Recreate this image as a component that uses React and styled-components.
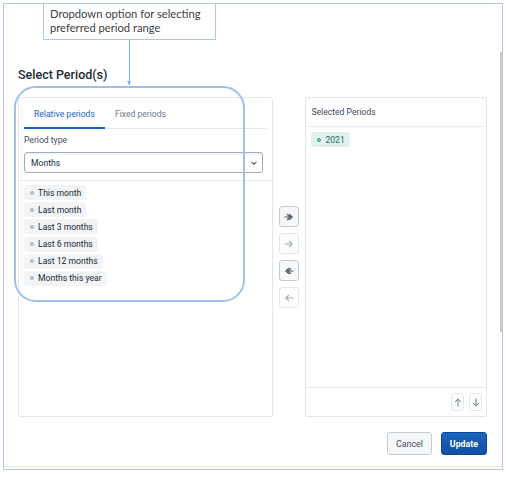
import React from "react";
import styled, { createGlobalStyle } from "styled-components";

const Global = createGlobalStyle`
  html, body { margin: 0; padding: 0; background: #fff; }
  body { font-family: Roboto, "Liberation Sans", sans-serif; color: #212934; }
  * { box-sizing: border-box; }
`;

const Page = styled.div`
  position: relative;
  width: 506px;
  height: 477px;
  padding: 3px;
  background: #fff;
`;

const Frame = styled.div`
  position: relative;
  width: 500px;
  height: 467px;
  border: 1px solid #b3c5ea;
  box-shadow: inset 0 -2px 0 #fff, inset 0 -3px 0 #e6e8ea;
  display: flex;
  flex-direction: column;
  padding: 63px 15px 0 14px;
`;

const Title = styled.h2`
  margin: 0 0 14px;
  height: 16px;
  line-height: 16px;
  font-size: 12.5px;
  font-weight: 500;
  color: #212934;
`;

const Columns = styled.div`
  display: flex;
  gap: 6px;
  height: 320px;
`;

const Panel = styled.div`
  width: ${(p) => p.$w}px;
  height: 320px;
  border: 1px solid #e3e7ec;
  border-radius: 2px;
  display: flex;
  flex-direction: column;
`;

const TabBar = styled.div`
  display: flex;
  margin: 0 5px;
  height: 31px;
  border-bottom: 1px solid #e3e7ec;
`;

const Tab = styled.div`
  padding: 0 10px;
  display: flex;
  align-items: center;
  font-size: 8.6px;
  color: ${(p) => (p.$active ? "#1565c0" : "#6e7a8a")};
  box-shadow: ${(p) => (p.$active ? "inset 0 -2px 0 #1565c0" : "none")};
  margin-bottom: -1px;
`;

const Field = styled.div`
  padding: 5px 9px 7px 5px;
  border-bottom: 1px solid #e8edf2;
`;

const Label = styled.div`
  font-size: 8.6px;
  line-height: 12px;
  height: 12px;
  color: #404b5a;
  margin-bottom: 6px;
`;

const Select = styled.div`
  height: 21px;
  border: 1px solid #a0adba;
  border-radius: 3px;
  display: flex;
  align-items: center;
  justify-content: space-between;
  padding: 0 4px 0 6px;
  font-size: 8.6px;
  color: #212934;
  box-shadow: inset 0 1px 2px rgba(48, 54, 60, 0.1);
`;

const OptionList = styled.div`
  display: flex;
  flex-direction: column;
  align-items: flex-start;
  gap: 2.2px;
  padding: 4px 5px;
`;

const Chip = styled.div`
  height: 15px;
  display: flex;
  align-items: center;
  gap: 4px;
  padding: 0 5px 0 6px;
  border-radius: 3px;
  background: ${(p) => (p.$selected ? "#e1f1ee" : "#f1f3f5")};
  color: ${(p) => (p.$selected ? "#1b6b5c" : "#212934")};
  font-size: 8.6px;
`;

const Dot = styled.span`
  width: 4px;
  height: 4px;
  border-radius: 50%;
  border: 1px solid ${(p) => (p.$selected ? "#3a9a86" : "#a0adba")};
  background: ${(p) => (p.$selected ? "#8fd0c1" : "#d5dbe1")};
`;

const Actions = styled.div`
  display: flex;
  flex-direction: column;
  gap: 6px;
  padding-top: 109px;
`;

const ActionBtn = styled.div`
  width: 20px;
  height: 21px;
  border-radius: 3px;
  border: 1px solid ${(p) => (p.$enabled ? "#c4cbd3" : "#e3e7ec")};
  background: ${(p) => (p.$enabled ? "#f6f7f9" : "#fbfcfc")};
  display: flex;
  align-items: center;
  justify-content: center;
  color: ${(p) => (p.$enabled ? "#4a5768" : "#a0adba")};
`;

const PanelHeader = styled.div`
  height: 29px;
  padding: 0 5px;
  display: flex;
  align-items: center;
  font-size: 8.6px;
  color: #404b5a;
  border-bottom: 1px solid #e8edf2;
`;

const SelectedList = styled.div`
  flex: 1;
  padding: 5px 5px;
  display: flex;
  flex-direction: column;
  align-items: flex-start;
`;

const PanelFooter = styled.div`
  height: 29px;
  border-top: 1px solid #e8edf2;
  display: flex;
  align-items: center;
  justify-content: flex-end;
  gap: 5px;
  padding: 0 4px;
`;

const SmallBtn = styled.div`
  width: 13px;
  height: 18px;
  border: 1px solid #e3e7ec;
  border-radius: 3px;
  background: #fbfcfc;
  display: flex;
  align-items: center;
  justify-content: center;
  color: #6e7a8a;
`;

const ButtonRow = styled.div`
  display: flex;
  justify-content: flex-end;
  gap: 9px;
  margin-top: 15px;
`;

const Button = styled.div`
  height: 23px;
  padding: 0 ${(p) => (p.$primary ? 8 : 8)}px;
  border-radius: 3px;
  display: flex;
  align-items: center;
  font-size: 8.8px;
  font-weight: ${(p) => (p.$primary ? 700 : 400)};
  color: ${(p) => (p.$primary ? "#fff" : "#404b5a")};
  background: ${(p) =>
    p.$primary ? "linear-gradient(#1d66c0, #0f4fa3)" : "#f6f7f9"};
  border: 1px solid ${(p) => (p.$primary ? "#0d4896" : "#c4cbd3")};
`;

const Scroll = styled.div`
  position: absolute;
  right: -1px;
  top: 48px;
  width: 3px;
  height: 280px;
  background: #c9c9c9;
`;

const Callout = styled.div`
  position: absolute;
  left: 43px;
  top: 3px;
  width: 173px;
  height: 37px;
  border: 1px solid #a9c8ea;
  background: #fff;
  padding: 3px 6px;
  font-family: Lato, "Open Sans", sans-serif;
  font-size: 11.2px;
  line-height: 14px;
  color: #404040;
`;

const Connector = styled.div`
  position: absolute;
  left: 129px;
  top: 40px;
  width: 1px;
  height: 45px;
  background: #86aee0;
  &::after {
    content: "";
    position: absolute;
    left: -2px;
    bottom: 0;
    border-left: 2.5px solid transparent;
    border-right: 2.5px solid transparent;
    border-top: 4px solid #86aee0;
  }
`;

const Highlight = styled.div`
  position: absolute;
  left: 14px;
  top: 86px;
  width: 231px;
  height: 216px;
  border: 2px solid #9fc0e6;
  border-radius: 22px;
  pointer-events: none;
`;

const ArrowIcon = ({ dir = "right", double }) => {
  const flip = dir === "left" ? "scale(-1,1) translate(-10,0)" : undefined;
  return (
    <svg width="10" height="10" viewBox="0 0 10 10">
      <g transform={flip} fill="none" stroke="currentColor" strokeWidth="1.2" strokeLinecap="round" strokeLinejoin="round">
        <path d="M1 5h7" />
        <path d="M5.5 2.5L8 5l-2.5 2.5" />
        {double && <path d="M3.5 2.5L6 5l-2.5 2.5" />}
      </g>
    </svg>
  );
};

const VArrow = ({ up }) => (
  <svg width="8" height="9" viewBox="0 0 8 9">
    <g transform={up ? undefined : "scale(1,-1) translate(0,-9)"} fill="none" stroke="currentColor" strokeWidth="1" strokeLinecap="round" strokeLinejoin="round">
      <path d="M4 8V1.2" />
      <path d="M1.3 3.8L4 1.2l2.7 2.6" />
    </g>
  </svg>
);

const Chevron = () => (
  <svg width="8" height="6" viewBox="0 0 8 6">
    <path d="M1.5 1.8L4 4.2l2.5-2.4" fill="none" stroke="#4a5768" strokeWidth="1.1" />
  </svg>
);

const options = [
  "This month",
  "Last month",
  "Last 3 months",
  "Last 6 months",
  "Last 12 months",
  "Months this year",
];

export default function App() {
  return (
    <Page>
      <Global />
      <Frame>
        <Title>Select Period(s)</Title>
        <Columns>
          <Panel $w={256}>
            <TabBar>
              <Tab $active>Relative periods</Tab>
              <Tab>Fixed periods</Tab>
            </TabBar>
            <Field>
              <Label>Period type</Label>
              <Select>
                <span>Months</span>
                <Chevron />
              </Select>
            </Field>
            <OptionList>
              {options.map((o) => (
                <Chip key={o}>
                  <Dot />
                  {o}
                </Chip>
              ))}
            </OptionList>
          </Panel>
          <Actions>
            <ActionBtn $enabled><ArrowIcon double /></ActionBtn>
            <ActionBtn><ArrowIcon /></ActionBtn>
            <ActionBtn $enabled><ArrowIcon dir="left" double /></ActionBtn>
            <ActionBtn><ArrowIcon dir="left" /></ActionBtn>
          </Actions>
          <Panel $w={182}>
            <PanelHeader>Selected Periods</PanelHeader>
            <SelectedList>
              <Chip $selected>
                <Dot $selected />
                2021
              </Chip>
            </SelectedList>
            <PanelFooter>
              <SmallBtn><VArrow up /></SmallBtn>
              <SmallBtn><VArrow /></SmallBtn>
            </PanelFooter>
          </Panel>
        </Columns>
        <ButtonRow>
          <Button>Cancel</Button>
          <Button $primary>Update</Button>
        </ButtonRow>
        <Scroll />
      </Frame>
      <Callout>
        Dropdown option for selecting
        <br />
        preferred period range
      </Callout>
      <Connector />
      <Highlight />
    </Page>
  );
}
